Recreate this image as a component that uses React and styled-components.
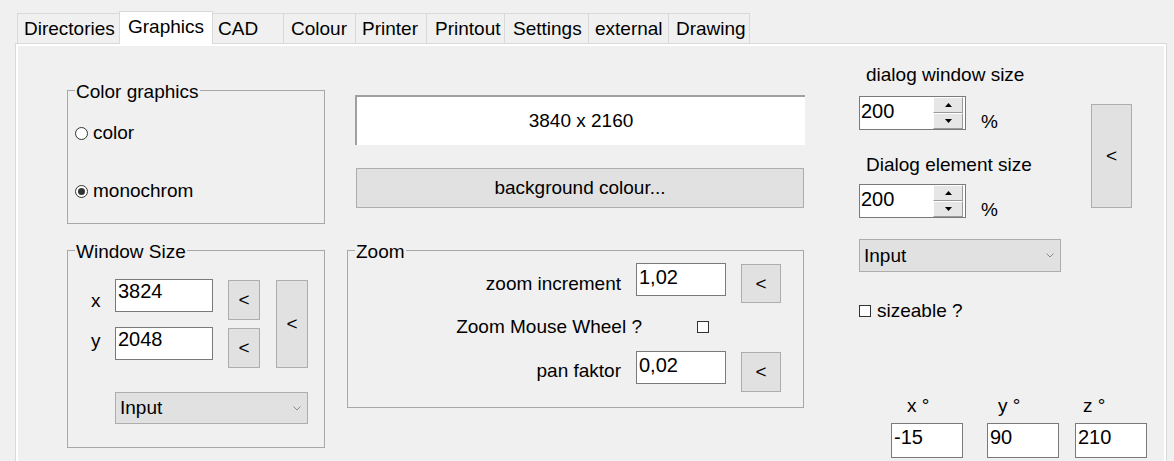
import React from 'react';
import styled, { createGlobalStyle } from 'styled-components';

const GlobalStyle = createGlobalStyle`
  html, body {
    margin: 0;
    padding: 0;
    background: #f0f0f0;
  }
  body {
    font-family: "Liberation Sans", Arial, sans-serif;
    font-size: 19px;
    color: #000;
  }
  * {
    box-sizing: border-box;
  }
`;

const Page = styled.div`
  width: 1174px;
  height: 461px;
  overflow: hidden;
  padding: 11px 0 0 15px;
`;

const TabStrip = styled.div`
  display: flex;
  align-items: flex-end;
  height: 32px;
  margin-left: 2px;
`;

const Tab = styled.div`
  position: relative;
  z-index: ${({ $active }) => ($active ? 2 : 1)};
  width: ${({ $w }) => $w}px;
  height: ${({ $active }) => ($active ? 33 : 30)}px;
  margin-left: -1px;
  margin-bottom: ${({ $active }) => ($active ? -1 : 0)}px;
  padding-left: ${({ $pl }) => $pl}px;
  line-height: 29px;
  border: 1px solid #d9d9d9;
  border-bottom: none;
  background: ${({ $active }) => ($active ? '#fff' : '#f0f0f0')};
  white-space: nowrap;

  &:first-child {
    margin-left: 0;
  }
`;

const Panel = styled.div`
  width: 1152px;
  height: 430px;
  border: 1px solid #d9d9d9;
  box-shadow: inset 0 0 0 2px #fff;
  display: flex;
  align-items: flex-start;
  padding-left: 51px;
`;

const Column = styled.div`
  display: flex;
  flex-direction: column;
  align-items: flex-start;
  width: ${({ $w }) => $w}px;
  margin-top: ${({ $mt }) => $mt}px;
  margin-left: ${({ $ml }) => $ml || 0}px;
`;

const GroupBox = styled.div`
  position: relative;
  width: ${({ $w }) => $w}px;
  height: ${({ $h }) => $h}px;
  margin-top: ${({ $mt }) => $mt || 0}px;
  border: 1px solid #a8a8a8;
`;

const Legend = styled.span`
  position: absolute;
  top: -10px;
  left: 7px;
  padding: 0 1px;
  line-height: 22px;
  background: #f0f0f0;
`;

const RadioList = styled.div`
  display: flex;
  flex-direction: column;
  gap: 36px;
  padding: 31px 0 0 7px;
`;

const RadioRow = styled.label`
  display: flex;
  align-items: center;
  gap: 5px;
  line-height: 22px;
`;

const RadioDot = styled.span`
  position: relative;
  width: 13px;
  height: 13px;
  border: 1px solid #333;
  border-radius: 50%;
  background: #fff;

  &::after {
    content: '';
    display: ${({ $on }) => ($on ? 'block' : 'none')};
    position: absolute;
    left: 2px;
    top: 2px;
    width: 7px;
    height: 7px;
    border-radius: 50%;
    background: #333;
  }
`;

const SizeGrid = styled.div`
  display: grid;
  grid-template-columns: 9px 98px 32px 32px;
  grid-template-rows: 48px 48px auto;
  column-gap: 15px;
  padding: 28px 0 0 23px;
`;

const AxisLabel = styled.span`
  padding-top: ${({ $pt }) => $pt}px;
  line-height: 22px;
`;

const TextBox = styled.div`
  width: ${({ $w }) => $w}px;
  height: ${({ $h }) => $h || 33}px;
  padding: ${({ $pt }) => $pt || 0}px 0 0 2px;
  border: 1px solid #7a7a7a;
  background: #fff;
  font-size: 20px;
  line-height: 23px;
`;

const Button = styled.button`
  display: flex;
  align-items: center;
  justify-content: center;
  width: ${({ $w }) => $w}px;
  height: ${({ $h }) => $h}px;
  margin: ${({ $m }) => $m || '0'};
  padding: 0;
  border: 1px solid #adadad;
  background: #e1e1e1;
  font: inherit;
  color: #000;
  grid-row: ${({ $row }) => $row || 'auto'};
  grid-column: ${({ $col }) => $col || 'auto'};
`;

const Select = styled.div`
  display: flex;
  align-items: center;
  justify-content: space-between;
  width: ${({ $w }) => $w}px;
  height: ${({ $h }) => $h || 32}px;
  margin-top: ${({ $mt }) => $mt || 0}px;
  padding: 0 6px 0 4px;
  border: 1px solid #adadad;
  background: #e1e1e1;
  grid-column: ${({ $span }) => $span || 'auto'};
`;

const Display = styled.div`
  display: flex;
  align-items: center;
  justify-content: center;
  width: 450px;
  height: 50px;
  margin: 51px 0 0 8px;
  border-top: 2px solid #a0a0a0;
  border-left: 2px solid #a0a0a0;
  background: #fff;
`;

const ZoomGrid = styled.div`
  display: grid;
  grid-template-columns: 1fr 90px 40px;
  grid-template-rows: 40px 48px 40px;
  column-gap: 15px;
  padding: 12px 22px 0 0;
`;

const FieldLabel = styled.span`
  justify-self: end;
  padding-top: ${({ $pt }) => $pt}px;
  line-height: 22px;
`;

const WheelRow = styled.div`
  grid-column: 1 / -1;
  display: flex;
  align-items: center;
  justify-content: flex-end;
  line-height: 22px;
`;

const CheckBox = styled.span`
  display: inline-block;
  width: 12px;
  height: 12px;
  margin: ${({ $m }) => $m || '0'};
  border: 1px solid #333;
  background: #fff;
`;

const Caption = styled.div`
  margin-top: ${({ $mt }) => $mt || 0}px;
  padding-left: 7px;
  line-height: 22px;
`;

const TopRow = styled.div`
  display: flex;
  align-items: flex-start;
`;

const SizeCol = styled.div`
  display: flex;
  flex-direction: column;
  width: 202px;
`;

const SpinRow = styled.div`
  display: flex;
  align-items: flex-end;
  margin-top: ${({ $mt }) => $mt}px;
`;

const Spinner = styled.div`
  display: flex;
  justify-content: space-between;
  width: 107px;
  height: 34px;
  border: 1px solid #7a7a7a;
  background: #fff;
`;

const SpinValue = styled.span`
  padding: 3px 0 0 1px;
  font-size: 20px;
  line-height: 23px;
`;

const SpinButtons = styled.div`
  display: flex;
  flex-direction: column;
  width: 30px;
  margin: 0 2px 0 0;
`;

const SpinHalf = styled.div`
  flex: 1;
  display: flex;
  align-items: center;
  justify-content: center;
  background: #e6e6e6;
  border-top: 1px solid #fff;
  border-left: 1px solid #fff;
  border-right: 1px solid #9a9a9a;
  border-bottom: 1px solid #9a9a9a;
`;

const Percent = styled.span`
  margin: 0 0 -3px 15px;
  line-height: 22px;
`;

const CheckRow = styled.label`
  display: flex;
  align-items: center;
  gap: 6px;
  margin-top: 28px;
  line-height: 22px;
`;

const AngleRow = styled.div`
  display: flex;
  margin: 73px 0 0 32px;
`;

const AngleField = styled.div`
  display: flex;
  flex-direction: column;
  gap: 6px;
  margin-left: ${({ $ml }) => $ml}px;
`;

const AngleLabel = styled.span`
  padding-left: ${({ $pl }) => $pl}px;
  line-height: 22px;
`;

const Chevron = () => (
  <svg width="8" height="5" viewBox="0 0 8 5">
    <polyline points="0.5,0.5 4,4 7.5,0.5" fill="none" stroke="#8a8a8a" strokeWidth="1" />
  </svg>
);

const Arrow = ({ up }) => (
  <svg width="7" height="4" viewBox="0 0 7 4">
    <polygon points={up ? '0,4 7,4 3.5,0' : '0,0 7,0 3.5,4'} fill="#000" />
  </svg>
);

const tabs = [
  ['Directories', 103, 6],
  ['Graphics', 94, 8],
  ['CAD', 72, 5],
  ['Colour', 73, 7],
  ['Printer', 72, 6],
  ['Printout', 79, 8],
  ['Settings', 85, 8],
  ['external', 81, 6],
  ['Drawing', 82, 7],
];

const Spin = ({ value }) => (
  <Spinner>
    <SpinValue>{value}</SpinValue>
    <SpinButtons>
      <SpinHalf><Arrow up /></SpinHalf>
      <SpinHalf><Arrow /></SpinHalf>
    </SpinButtons>
  </Spinner>
);

export default function App() {
  return (
    <Page>
      <GlobalStyle />
      <TabStrip>
        {tabs.map(([name, w, pl]) => (
          <Tab key={name} $w={w} $pl={pl} $active={name === 'Graphics'}>
            {name}
          </Tab>
        ))}
      </TabStrip>
      <Panel>
        <Column $w={258} $mt={46}>
          <GroupBox $w={258} $h={134}>
            <Legend>Color graphics</Legend>
            <RadioList>
              <RadioRow><RadioDot />color</RadioRow>
              <RadioRow><RadioDot $on />monochrom</RadioRow>
            </RadioList>
          </GroupBox>
          <GroupBox $w={258} $h={198} $mt={26}>
            <Legend>Window Size</Legend>
            <SizeGrid>
              <Button $w={32} $h={88} $m="1px 0 0 1px" $row="1 / 3" $col="4">&lt;</Button>
              <AxisLabel $pt={11}>x</AxisLabel>
              <TextBox $w={98}>3824</TextBox>
              <Button $w={32} $h={40} $m="1px 0 0">&lt;</Button>
              <AxisLabel $pt={3}>y</AxisLabel>
              <TextBox $w={98}>2048</TextBox>
              <Button $w={32} $h={40} $m="1px 0 0">&lt;</Button>
              <Select $w={193} $mt={17} $span="2 / 5">
                <span>Input</span>
                <Chevron />
              </Select>
            </SizeGrid>
          </GroupBox>
        </Column>

        <Column $w={458} $mt={0} $ml={22}>
          <Display>3840 x 2160</Display>
          <Button $w={448} $h={40} $m="23px 0 0 9px">background colour...</Button>
          <GroupBox $w={457} $h={158} $mt={42}>
            <Legend>Zoom</Legend>
            <ZoomGrid>
              <FieldLabel $pt={10}>zoom increment</FieldLabel>
              <TextBox $w={90} $pt={2}>1,02</TextBox>
              <Button $w={40} $h={39} $m="1px 0 0">&lt;</Button>
              <WheelRow>
                Zoom Mouse Wheel ?
                <CheckBox $m="0 72px 0 55px" />
              </WheelRow>
              <FieldLabel $pt={9}>pan faktor</FieldLabel>
              <TextBox $w={90} $pt={2}>0,02</TextBox>
              <Button $w={40} $h={40} $m="1px 0 0">&lt;</Button>
            </ZoomGrid>
          </GroupBox>
        </Column>

        <Column $w={290} $mt={20} $ml={54}>
          <TopRow>
            <SizeCol>
              <Caption>dialog window size</Caption>
              <SpinRow $mt={10}>
                <Spin value="200" />
                <Percent>%</Percent>
              </SpinRow>
              <Caption $mt={24}>Dialog element size</Caption>
              <SpinRow $mt={8}>
                <Spin value="200" />
                <Percent>%</Percent>
              </SpinRow>
              <Select $w={202} $h={33} $mt={21}>
                <span>Input</span>
                <Chevron />
              </Select>
              <CheckRow>
                <CheckBox />
                sizeable ?
              </CheckRow>
            </SizeCol>
            <Button $w={41} $h={104} $m="40px 0 0 30px">&lt;</Button>
          </TopRow>
          <AngleRow>
            <AngleField $ml={0}>
              <AngleLabel $pl={16}>x °</AngleLabel>
              <TextBox $w={72} $h={35} $pt={2}>-15</TextBox>
            </AngleField>
            <AngleField $ml={24}>
              <AngleLabel $pl={11}>y °</AngleLabel>
              <TextBox $w={72} $h={35} $pt={2}>90</TextBox>
            </AngleField>
            <AngleField $ml={16}>
              <AngleLabel $pl={8}>z °</AngleLabel>
              <TextBox $w={72} $h={35} $pt={2}>210</TextBox>
            </AngleField>
          </AngleRow>
        </Column>
      </Panel>
    </Page>
  );
}
